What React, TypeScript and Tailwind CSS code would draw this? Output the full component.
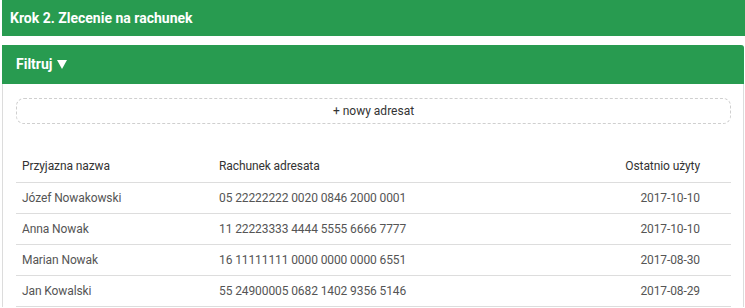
const rows = [
  { name: "Józef Nowakowski", account: "05 22222222 0020 0846 2000 0001", date: "2017-10-10" },
  { name: "Anna Nowak", account: "11 22223333 4444 5555 6666 7777", date: "2017-10-10" },
  { name: "Marian Nowak", account: "16 11111111 0000 0000 0000 6551", date: "2017-08-30" },
  { name: "Jan Kowalski", account: "55 24900005 0682 1402 9356 5146", date: "2017-08-29" },
];

export default function App() {
  return (
    <div className="w-[745px] h-[308px] overflow-hidden bg-white pl-[2px] font-['Roboto',sans-serif]">
      {/* Step header */}
      <div className="flex h-[36px] items-center bg-[#289b50] pl-[8px] text-[14px] font-bold text-white">
        Krok 2. Zlecenie na rachunek
      </div>

      {/* Filter panel */}
      <div className="mt-[9px] w-[742px] rounded-tr-[3px] border-x border-[#dcdcdc]">
        <div className="-mx-px flex h-[39px] items-center rounded-tr-[3px] bg-[#289b50] pl-[14px] text-[14px] font-bold text-white">
          Filtruj
          <svg viewBox="0 0 10 9" className="ml-[5px] h-[9px] w-[10px]">
            <path d="M0 0h10L5 9z" fill="white" />
          </svg>
        </div>

        <div className="pl-[13px] pr-[12px] pt-[14px]">
          <button className="flex h-[26px] w-full items-center justify-center rounded-[8px] border border-dashed border-[#cfcfcf] text-[12px] text-[#333]">
            + nowy adresat
          </button>

          <table className="mt-[27px] w-full border-collapse text-[12px] tracking-[-0.1px]">
            <thead>
              <tr className="h-[31px] border-b border-[#dddddd] text-[#333]">
                <th className="w-[203px] pl-[6px] text-left font-normal">Przyjazna nazwa</th>
                <th className="text-left font-normal">Rachunek adresata</th>
                <th className="pr-[31px] text-right font-normal">Ostatnio użyty</th>
              </tr>
            </thead>
            <tbody>
              {rows.map((r) => (
                <tr key={r.name} className="h-[31px] border-b border-[#dddddd] text-[#555]">
                  <td className="pl-[6px]">{r.name}</td>
                  <td>{r.account}</td>
                  <td className="pr-[31px] text-right">{r.date}</td>
                </tr>
              ))}
            </tbody>
          </table>
        </div>
      </div>
    </div>
  );
}
